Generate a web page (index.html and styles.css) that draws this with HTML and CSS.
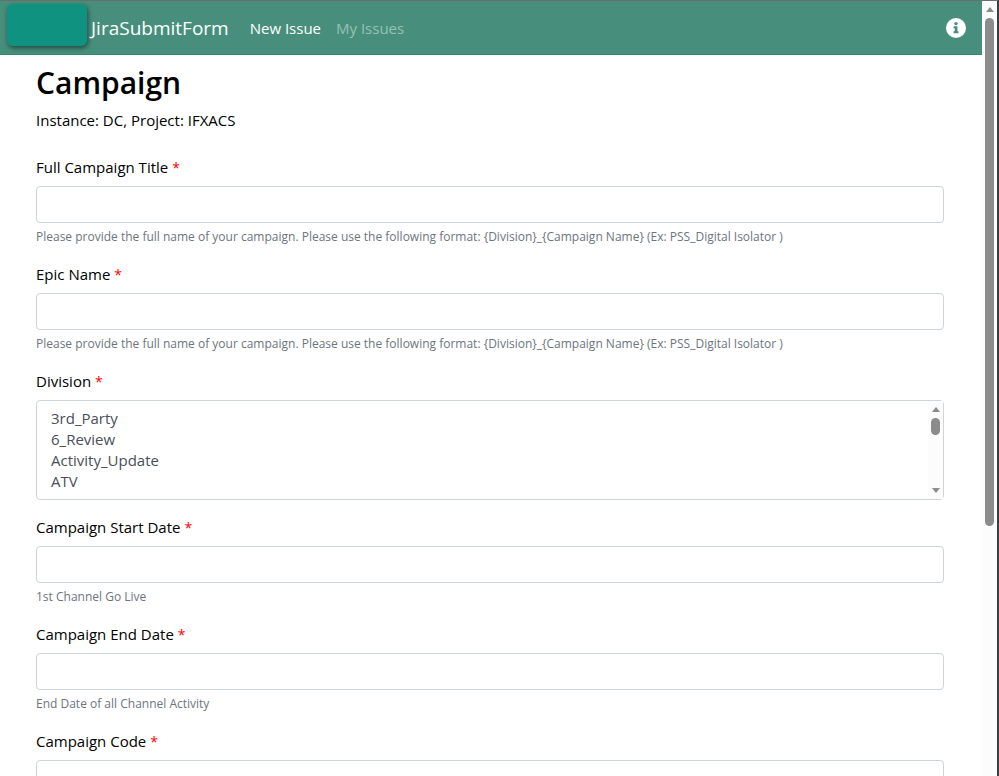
FILE: index.html
```html
<!DOCTYPE html>
<html lang="en">
<head>
<meta charset="utf-8">
<title>JiraSubmitForm</title>
<link rel="stylesheet" href="styles.css">
</head>
<body>
<div class="window">
  <div class="page">
    <header class="navbar">
      <div class="logo"></div>
      <a class="brand" href="#">JiraSubmitForm</a>
      <nav class="nav">
        <a class="nav-link active" href="#">New Issue</a>
        <a class="nav-link" href="#">My Issues</a>
      </nav>
      <a class="info" href="#" aria-label="Information">
        <svg viewBox="0 0 20 20" width="20" height="20"><circle cx="10" cy="10" r="10" fill="#fff"/><circle cx="10" cy="5.6" r="1.7" fill="#478f7c"/><path d="M7.6 8.2h3.8v5h1.1v2H7.6v-2h1.1v-3H7.6z" fill="#478f7c"/></svg>
      </a>
    </header>
    <main class="content">
      <h1>Campaign</h1>
      <p class="meta">Instance: DC, Project: IFXACS</p>
      <form>
        <div class="field">
          <label for="title">Full Campaign Title <span class="required">*</span></label>
          <input id="title" type="text">
          <small>Please provide the full name of your campaign. Please use the following format: {Division}_{Campaign Name} (Ex: PSS_Digital Isolator )</small>
        </div>
        <div class="field">
          <label for="epic">Epic Name <span class="required">*</span></label>
          <input id="epic" type="text">
          <small>Please provide the full name of your campaign. Please use the following format: {Division}_{Campaign Name} (Ex: PSS_Digital Isolator )</small>
        </div>
        <div class="field">
          <label for="division">Division <span class="required">*</span></label>
          <div class="listbox">
            <select id="division" size="4" multiple>
              <option>3rd_Party</option>
              <option>6_Review</option>
              <option>Activity_Update</option>
              <option>ATV</option>
            </select>
            <div class="scrollbar list-scrollbar">
              <span class="arrow up"></span>
              <span class="thumb"></span>
              <span class="arrow down"></span>
            </div>
          </div>
        </div>
        <div class="field">
          <label for="start">Campaign Start Date <span class="required">*</span></label>
          <input id="start" type="text">
          <small>1st Channel Go Live</small>
        </div>
        <div class="field">
          <label for="end">Campaign End Date <span class="required">*</span></label>
          <input id="end" type="text">
          <small>End Date of all Channel Activity</small>
        </div>
        <div class="field">
          <label for="code">Campaign Code <span class="required">*</span></label>
          <input id="code" type="text">
        </div>
      </form>
    </main>
  </div>
  <div class="scrollbar page-scrollbar">
    <span class="arrow up"></span>
    <span class="thumb"></span>
  </div>
</div>
</body>
</html>
```
FILE: styles.css
```css
* { box-sizing: border-box; }

body {
  margin: 0;
  background: #fff;
  color: #000;
  font-family: "Open Sans", "Noto Sans", sans-serif;
  font-size: 15px;
  line-height: 22px;
}

.window {
  display: flex;
  height: 100vh;
  overflow: hidden;
  border-top: 1px solid #68706d;
  border-right: 2px solid #3c3d3f;
}

.page {
  flex: 1;
  min-width: 0;
  overflow: hidden;
}

.navbar {
  display: flex;
  align-items: center;
  height: 54px;
  padding: 0 16px 0 7px;
  background: #478f7c;
  border-bottom: 1px solid #2e8a70;
}

.logo {
  align-self: flex-start;
  width: 80px;
  height: 42px;
  margin-top: 3px;
  border-radius: 6px;
  background: #0f9380;
  box-shadow: 1px 2px 5px rgba(0, 0, 0, 0.5);
}

.navbar a {
  color: #fff;
  text-decoration: none;
}

.brand {
  margin-left: 4px;
  font-size: 19px;
}

.nav {
  display: flex;
  gap: 15px;
  margin-left: 21px;
}

.navbar .nav-link { color: #98c0b4; }
.navbar .nav-link.active { color: #fff; }

.info {
  display: flex;
  margin-left: auto;
}

.content { padding: 8px 38px 0 36px; }

h1 {
  margin: 0 0 6px;
  font-size: 30px;
  font-weight: 600;
  line-height: 40px;
}

.meta { margin: 0 0 25px; }

.field { margin-bottom: 16px; }

label {
  display: block;
  margin-bottom: 8px;
}

.required {
  color: #f00;
  font-size: 14px;
  line-height: 1;
}

input,
select {
  display: block;
  width: 100%;
  border: 1px solid #ced4da;
  border-radius: 4px;
  background: #fff;
  color: #495057;
  font: inherit;
}

input {
  height: 37px;
  padding: 6px 12px;
}

small {
  display: block;
  margin-top: 4px;
  color: #6c757d;
  font-size: 12px;
  line-height: 20px;
}

.listbox { position: relative; }

select {
  height: 100px;
  padding: 7px 12px;
  overflow: hidden;
  scrollbar-width: none;
}

option {
  min-height: 0;
  padding: 0 2px 1px;
}

.scrollbar {
  display: flex;
  flex-direction: column;
  align-items: center;
  background: #fcfcfc;
}

.thumb {
  width: 9px;
  border-radius: 5px;
  background: #8b8b8b;
}

.arrow {
  border: 4px solid transparent;
}

.up {
  border-top: 0;
  border-bottom: 5px solid #8b8b8b;
}

.down {
  margin-top: auto;
  border-bottom: 0;
  border-top: 5px solid #8b8b8b;
}

.page-scrollbar {
  width: 15px;
  padding-top: 6px;
}

.page-scrollbar .thumb {
  height: 66%;
  margin-top: 6px;
}

.list-scrollbar {
  position: absolute;
  top: 1px;
  right: 1px;
  bottom: 1px;
  width: 15px;
  padding: 6px 0;
}

.list-scrollbar .thumb {
  height: 17px;
  margin-top: 6px;
}
```
